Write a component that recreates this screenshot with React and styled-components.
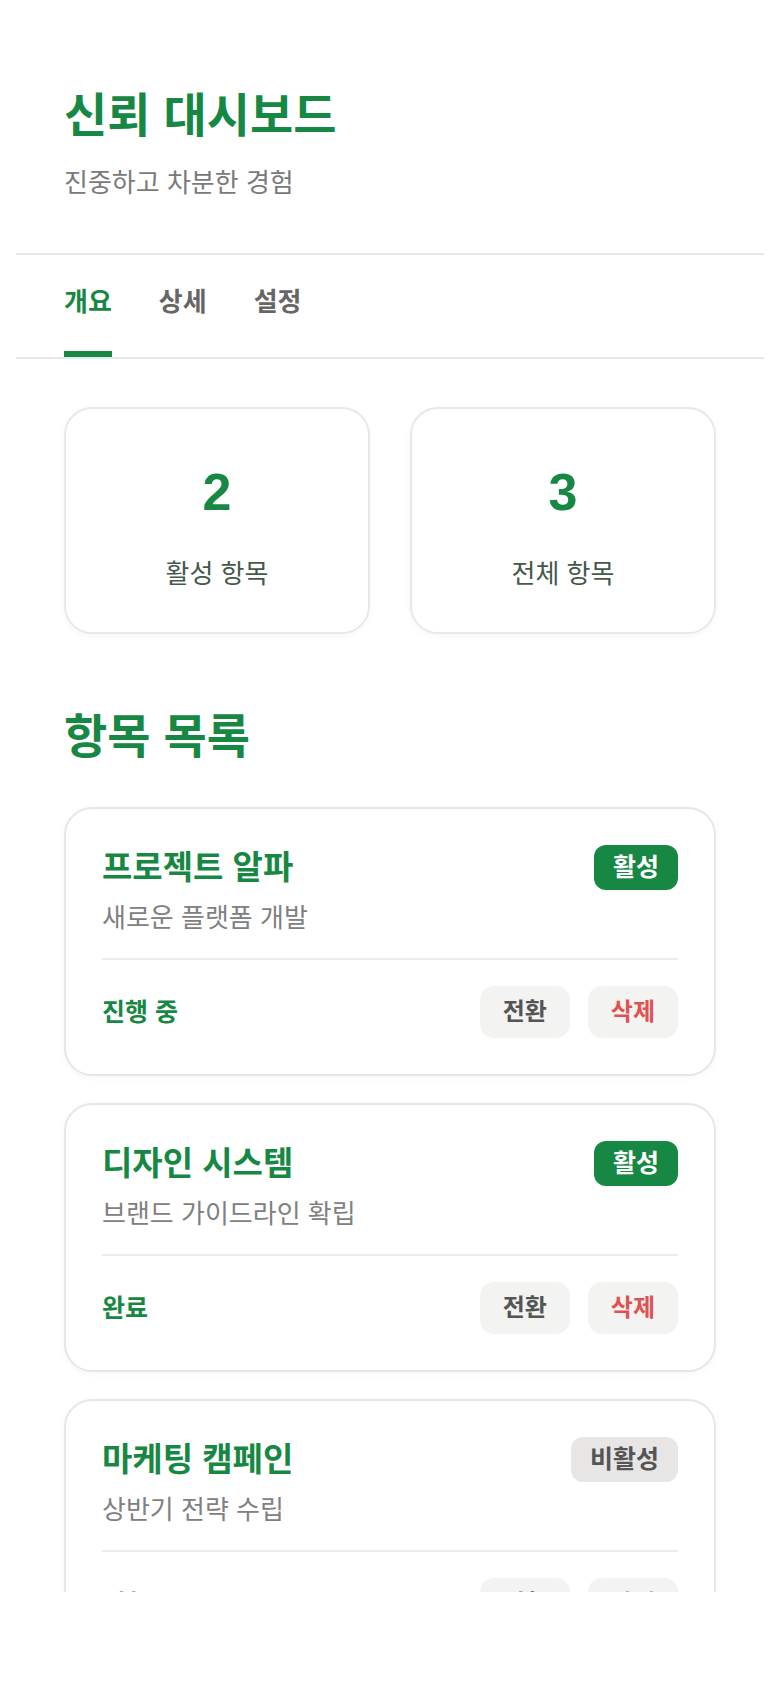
import styled, { createGlobalStyle } from 'styled-components';

const GlobalStyle = createGlobalStyle`
    body {
        margin: 16px;
        background: #ffffff;
        font-family: "Liberation Sans", "Noto Sans CJK KR", sans-serif;
    }
    * {
        box-sizing: border-box;
    }
`;

const items = [
    { title: '프로젝트 알파', desc: '새로운 플랫폼 개발', active: true, status: '진행 중' },
    { title: '디자인 시스템', desc: '브랜드 가이드라인 확립', active: true, status: '완료' },
    { title: '마케팅 캠페인', desc: '상반기 전략 수립', active: false, status: '계획 중' },
];

const tabs = ['개요', '상세', '설정'];

function App() {
    return (
        <>
            <GlobalStyle />
            <Page>
                <Header>
                    <Title>신뢰 대시보드</Title>
                    <Subtitle>진중하고 차분한 경험</Subtitle>
                </Header>
                <TabBar>
                    {tabs.map((t, i) => (
                        <Tab key={t} $active={i === 0}>{t}</Tab>
                    ))}
                </TabBar>
                <Content>
                    <StatGrid>
                        <StatCard>
                            <StatNumber>2</StatNumber>
                            <StatLabel>활성 항목</StatLabel>
                        </StatCard>
                        <StatCard>
                            <StatNumber>3</StatNumber>
                            <StatLabel>전체 항목</StatLabel>
                        </StatCard>
                    </StatGrid>

                    <SectionTitle>항목 목록</SectionTitle>

                    <ItemList>
                        {items.map((item) => (
                            <ItemCard key={item.title}>
                                <ItemTop>
                                    <ItemRow>
                                        <ItemTitle>{item.title}</ItemTitle>
                                        <Badge $active={item.active}>{item.active ? '활성' : '비활성'}</Badge>
                                    </ItemRow>
                                    <ItemDesc>{item.desc}</ItemDesc>
                                </ItemTop>
                                <ItemBottom>
                                    <Status>{item.status}</Status>
                                    <Actions>
                                        <ActionButton>전환</ActionButton>
                                        <ActionButton $danger>삭제</ActionButton>
                                    </Actions>
                                </ItemBottom>
                            </ItemCard>
                        ))}
                    </ItemList>
                </Content>
            </Page>
        </>
    );
}

const green = '#178843';

const Page = styled.div`
    height: calc(100vh - 112px);
    overflow: hidden;
    background: #ffffff;
`;

const Header = styled.header`
    padding: 74px 48px 54px;
    border-bottom: 2px solid #e8e8e8;
`;

const Title = styled.h1`
    margin: 0;
    font-size: 47px;
    line-height: 52px;
    font-weight: 700;
    color: ${green};
`;

const Subtitle = styled.p`
    margin: 25px 0 0;
    font-size: 26px;
    line-height: 32px;
    color: #7a7a7a;
`;

const TabBar = styled.nav`
    display: flex;
    gap: 47px;
    padding: 0 48px;
    border-bottom: 2px solid #e8e8e8;
`;

const Tab = styled.div`
    padding: 29px 0 31px;
    font-size: 26px;
    line-height: 36px;
    font-weight: 700;
    color: ${(p) => (p.$active ? green : '#666666')};
    border-bottom: 6px solid ${(p) => (p.$active ? green : 'transparent')};
`;

const Content = styled.main`
    padding: 48px;
`;

const StatGrid = styled.div`
    display: grid;
    grid-template-columns: 1fr 1fr;
    gap: 40px;
`;

const StatCard = styled.div`
    padding: 52px 24px 40px;
    border: 2px solid #e8e8e8;
    border-radius: 28px;
    text-align: center;
    box-shadow: 0 2px 6px rgba(0, 0, 0, 0.04);
`;

const StatNumber = styled.div`
    font-size: 52px;
    line-height: 62px;
    font-weight: 700;
    color: ${green};
`;

const StatLabel = styled.div`
    margin-top: 33px;
    font-size: 26px;
    line-height: 36px;
    color: #44594b;
`;

const SectionTitle = styled.h2`
    margin: 76px 0 44px;
    font-size: 47px;
    line-height: 53px;
    font-weight: 700;
    color: ${green};
`;

const ItemList = styled.div`
    display: flex;
    flex-direction: column;
    gap: 27px;
`;

const ItemCard = styled.div`
    padding: 36px;
    border: 2px solid #e6e6e6;
    border-radius: 28px;
    box-shadow: 0 2px 6px rgba(0, 0, 0, 0.04);
`;

const ItemTop = styled.div`
    padding-bottom: 22px;
    border-bottom: 2px solid #ececec;
`;

const ItemRow = styled.div`
    display: flex;
    align-items: center;
    justify-content: space-between;
`;

const ItemTitle = styled.h3`
    margin: 0;
    font-size: 33px;
    line-height: 36px;
    font-weight: 700;
    color: ${green};
`;

const Badge = styled.span`
    padding: 8px 19px;
    border-radius: 12px;
    font-size: 25px;
    line-height: 29px;
    font-weight: 700;
    background: ${(p) => (p.$active ? green : '#e8e6e4')};
    color: ${(p) => (p.$active ? '#ffffff' : '#555555')};
`;

const ItemDesc = styled.p`
    margin: 10px 0 0;
    font-size: 26px;
    line-height: 36px;
    color: #808080;
`;

const ItemBottom = styled.div`
    display: flex;
    align-items: center;
    justify-content: space-between;
    padding-top: 26px;
`;

const Status = styled.span`
    font-size: 25px;
    line-height: 36px;
    font-weight: 700;
    color: ${green};
`;

const Actions = styled.div`
    display: flex;
    gap: 18px;
`;

const ActionButton = styled.button`
    padding: 12px 23px;
    border: none;
    border-radius: 14px;
    background: #f3f3f2;
    font-family: inherit;
    font-size: 24px;
    line-height: 28px;
    font-weight: 700;
    color: ${(p) => (p.$danger ? '#e05252' : '#555555')};
`;

export default App;
